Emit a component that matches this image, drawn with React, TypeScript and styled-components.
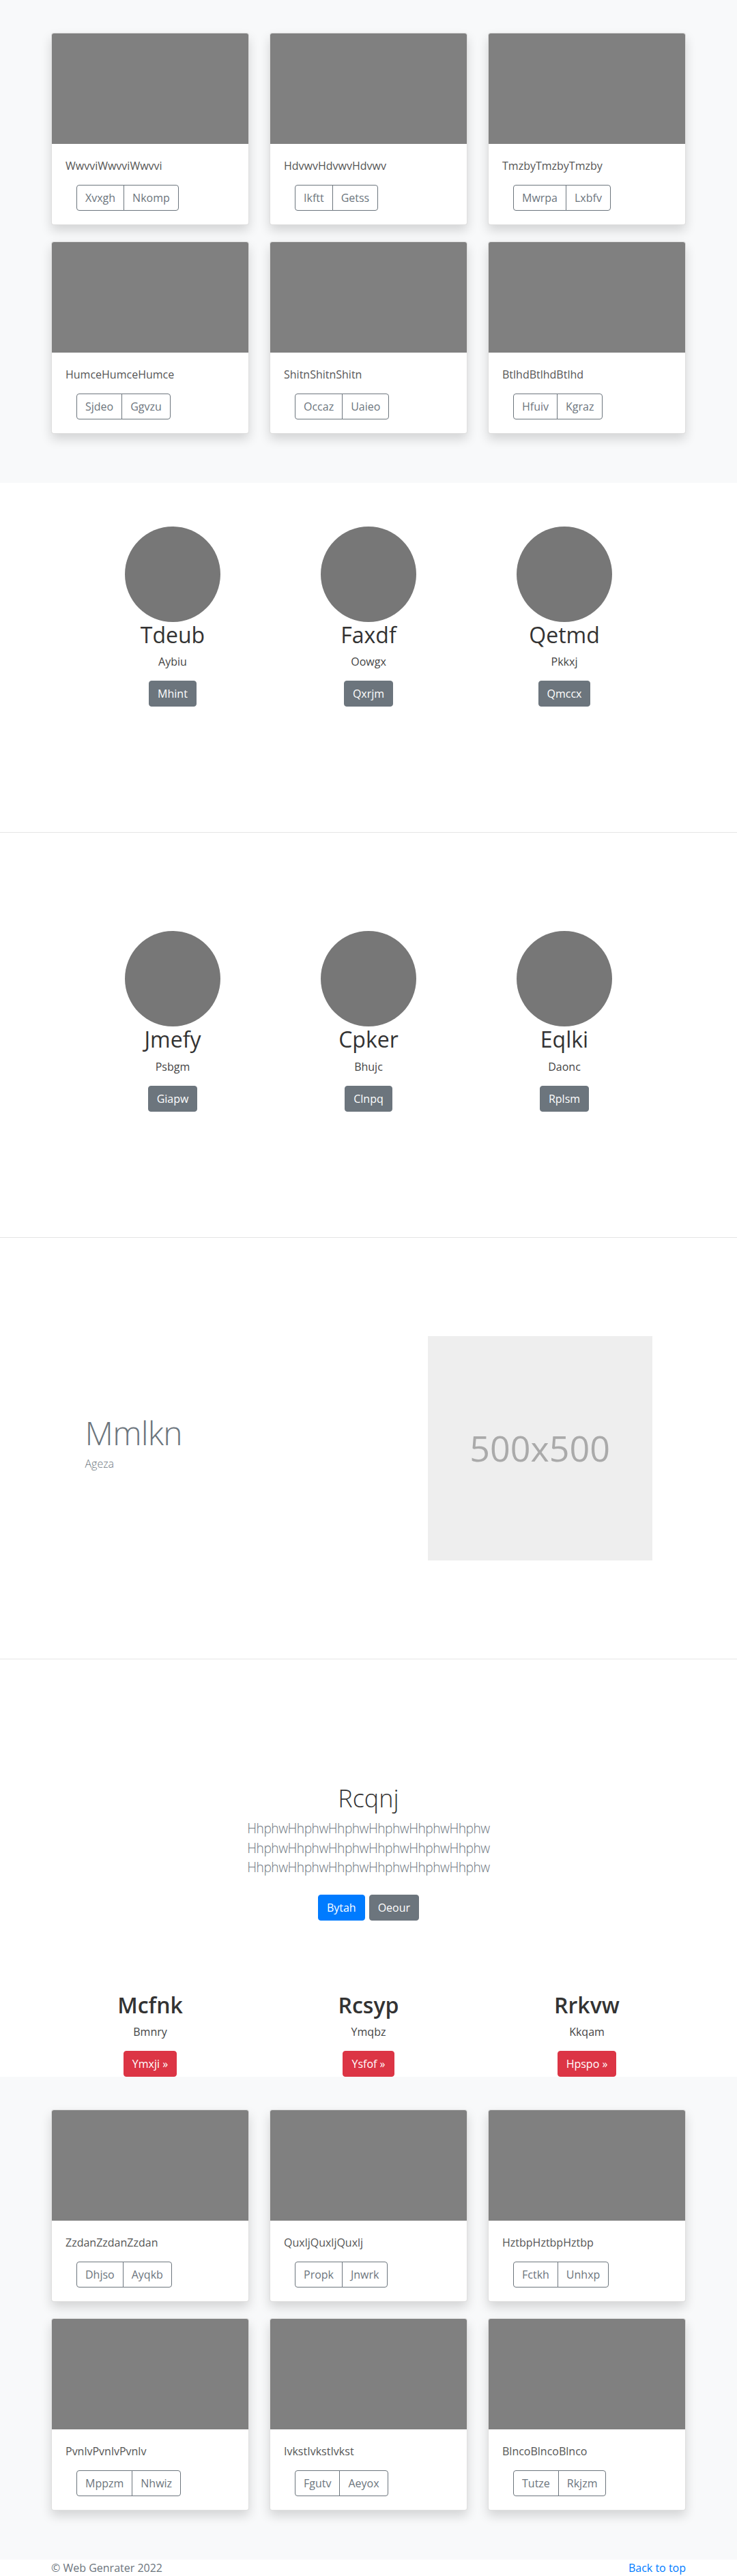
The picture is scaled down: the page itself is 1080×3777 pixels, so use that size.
import React from "react";
import styled, { createGlobalStyle, css } from "styled-components";

interface AlbumCard {
    text: string;
    actions: [string, string];
}

interface Person {
    name: string;
    role: string;
    action: string;
}

const topAlbum: AlbumCard[] = [
    { text: "WwvviWwvviWwvvi", actions: ["Xvxgh", "Nkomp"] },
    { text: "HdvwvHdvwvHdvwv", actions: ["Ikftt", "Getss"] },
    { text: "TmzbyTmzbyTmzby", actions: ["Mwrpa", "Lxbfv"] },
    { text: "HumceHumceHumce", actions: ["Sjdeo", "Ggvzu"] },
    { text: "ShitnShitnShitn", actions: ["Occaz", "Uaieo"] },
    { text: "BtlhdBtlhdBtlhd", actions: ["Hfuiv", "Kgraz"] },
];

const bottomAlbum: AlbumCard[] = [
    { text: "ZzdanZzdanZzdan", actions: ["Dhjso", "Ayqkb"] },
    { text: "QuxljQuxljQuxlj", actions: ["Propk", "Jnwrk"] },
    { text: "HztbpHztbpHztbp", actions: ["Fctkh", "Unhxp"] },
    { text: "PvnlvPvnlvPvnlv", actions: ["Mppzm", "Nhwiz"] },
    { text: "IvkstIvkstIvkst", actions: ["Fgutv", "Aeyox"] },
    { text: "BlncoBlncoBlnco", actions: ["Tutze", "Rkjzm"] },
];

const teamOne: Person[] = [
    { name: "Tdeub", role: "Aybiu", action: "Mhint" },
    { name: "Faxdf", role: "Oowgx", action: "Qxrjm" },
    { name: "Qetmd", role: "Pkkxj", action: "Qmccx" },
];

const teamTwo: Person[] = [
    { name: "Jmefy", role: "Psbgm", action: "Giapw" },
    { name: "Cpker", role: "Bhujc", action: "Clnpq" },
    { name: "Eqlki", role: "Daonc", action: "Rplsm" },
];

const highlights: Person[] = [
    { name: "Mcfnk", role: "Bmnry", action: "Ymxji »" },
    { name: "Rcsyp", role: "Ymqbz", action: "Ysfof »" },
    { name: "Rrkvw", role: "Kkqam", action: "Hpspo »" },
];

const leadLine = "HhphwHhphwHhphwHhphwHhphwHhphw";

const GlobalStyle = createGlobalStyle`
    * { box-sizing: border-box; }
    body {
        margin: 0;
        font-family: "Open Sans", "Noto Sans", "Liberation Sans", sans-serif;
        font-size: 16px;
        line-height: 24px;
        color: #212529;
        background: #fff;
    }
`;

const Album = ({ cards }: { cards: AlbumCard[] }) => (
    <AlbumBlock>
        <Container>
            <CardGrid>
                {cards.map((card) => (
                    <Card key={card.text}>
                        <CardImage />
                        <CardBody>
                            <CardText>{card.text}</CardText>
                            <ButtonGroup>
                                {card.actions.map((a) => (
                                    <OutlineButton key={a}>{a}</OutlineButton>
                                ))}
                            </ButtonGroup>
                        </CardBody>
                    </Card>
                ))}
            </CardGrid>
        </Container>
    </AlbumBlock>
);

const Team = ({ people, top }: { people: Person[]; top: number }) => (
    <Band $top={top} $bottom={184} $divider>
        <WideContainer>
            <TeamGrid>
                {people.map((p) => (
                    <Member key={p.name}>
                        <Avatar />
                        <MemberName>{p.name}</MemberName>
                        <MemberRole>{p.role}</MemberRole>
                        <SolidButton $tone="secondary" $gap={16}>
                            {p.action}
                        </SolidButton>
                    </Member>
                ))}
            </TeamGrid>
        </WideContainer>
    </Band>
);

const App = () => {
    return (
        <>
            <GlobalStyle />
            <Album cards={topAlbum} />
            <Team people={teamOne} top={64} />
            <Team people={teamTwo} top={144} />

            <Band $top={144} $bottom={144} $divider>
                <WideContainer>
                    <Featurette>
                        <FeatureText>
                            <FeatureHeading>Mmlkn</FeatureHeading>
                            <FeatureLead>Ageza</FeatureLead>
                        </FeatureText>
                        <FeatureMedia>
                            <Placeholder>500x500</Placeholder>
                        </FeatureMedia>
                    </Featurette>
                </WideContainer>
            </Band>

            <Band $top={182} $bottom={0}>
                <Hero>
                    <HeroTitle>Rcqnj</HeroTitle>
                    <HeroLead>
                        {leadLine}
                        <br />
                        {leadLine}
                        <br />
                        {leadLine}
                    </HeroLead>
                    <HeroActions>
                        <SolidButton $tone="primary">Bytah</SolidButton>
                        <SolidButton $tone="secondary">Oeour</SolidButton>
                    </HeroActions>
                </Hero>
                <Container>
                    <HighlightGrid>
                        {highlights.map((h) => (
                            <Member key={h.name}>
                                <HighlightName>{h.name}</HighlightName>
                                <HighlightRole>{h.role}</HighlightRole>
                                <SolidButton $tone="danger" $gap={16}>
                                    {h.action}
                                </SolidButton>
                            </Member>
                        ))}
                    </HighlightGrid>
                </Container>
            </Band>

            <Album cards={bottomAlbum} />

            <Footer>
                <FooterNote>© Web Genrater 2022</FooterNote>
                <FooterLink href="#">Back to top</FooterLink>
            </Footer>
        </>
    );
};

const Container = styled.div`
    width: 930px;
    margin: 0 auto;
`;

const WideContainer = styled.div`
    width: 861px;
    margin: 0 auto;
`;

const AlbumBlock = styled.section`
    background: #f8f9fa;
    padding: 48px 0;
`;

const CardGrid = styled.div`
    display: grid;
    grid-template-columns: repeat(3, 290px);
    column-gap: 30px;
    row-gap: 24px;
    margin-bottom: 24px;
`;

const Card = styled.div`
    background: #fff;
    border: 1px solid rgba(0, 0, 0, 0.125);
    border-radius: 4px;
    overflow: hidden;
    box-shadow: 0 8px 16px rgba(0, 0, 0, 0.15);
`;

const CardImage = styled.div`
    aspect-ratio: 16 / 9;
    background: #808080;
`;

const CardBody = styled.div`
    padding: 20px;
`;

const CardText = styled.p`
    margin: 0 0 16px;
    color: #555;
`;

const ButtonGroup = styled.div`
    display: inline-flex;
    margin-left: 16px;
`;

const OutlineButton = styled.button`
    font: inherit;
    line-height: 24px;
    padding: 6px 12px;
    background: transparent;
    color: #6c757d;
    border: 1px solid #6c757d;
    border-radius: 0;
    &:first-child {
        border-radius: 4px 0 0 4px;
    }
    &:last-child {
        margin-left: -1px;
        border-radius: 0 4px 4px 0;
    }
`;

const tones = {
    primary: "#007bff",
    secondary: "#6c757d",
    danger: "#dc3545",
};

const SolidButton = styled.button<{ $tone: keyof typeof tones; $gap?: number }>`
    font: inherit;
    line-height: 24px;
    padding: 6px 12px;
    color: #fff;
    border: 1px solid ${(p) => tones[p.$tone]};
    background: ${(p) => tones[p.$tone]};
    border-radius: 4px;
    ${(p) =>
        p.$gap !== undefined &&
        css`
            margin-top: ${p.$gap}px;
        `}
`;

const Band = styled.section<{ $top: number; $bottom: number; $divider?: boolean }>`
    background: #fff;
    padding-top: ${(p) => p.$top}px;
    padding-bottom: ${(p) => p.$bottom}px;
    ${(p) =>
        p.$divider &&
        css`
            border-bottom: 1px solid #e5e5e5;
        `}
`;

const TeamGrid = styled.div`
    display: grid;
    grid-template-columns: repeat(3, 1fr);
`;

const Member = styled.div`
    display: flex;
    flex-direction: column;
    align-items: center;
    text-align: center;
`;

const Avatar = styled.div`
    width: 140px;
    height: 140px;
    border-radius: 50%;
    background: #777;
`;

const MemberName = styled.h2`
    margin: 0;
    font-size: 32px;
    line-height: 38.4px;
    font-weight: 400;
    color: #333;
`;

const MemberRole = styled.p`
    margin: 8px 0 0;
    color: #444;
`;

const Featurette = styled.div`
    display: grid;
    grid-template-columns: 7fr 5fr;
`;

const FeatureText = styled.div`
    padding: 0 15px 11px;
    align-self: center;
`;

const FeatureHeading = styled.h2`
    margin: 0 0 9px;
    font-size: 48px;
    line-height: 1;
    font-weight: 300;
    letter-spacing: -0.8px;
    color: #6c757d;
`;

const FeatureLead = styled.p`
    margin: 0;
    font-weight: 300;
    color: #6c757d;
`;

const FeatureMedia = styled.div`
    padding: 0 15px;
`;

const Placeholder = styled.div`
    aspect-ratio: 1;
    background: #eee;
    color: #aaa;
    font-size: 52px;
    display: flex;
    align-items: center;
    justify-content: center;
`;

const Hero = styled.div`
    text-align: center;
`;

const HeroTitle = styled.h1`
    margin: 0;
    font-size: 36px;
    line-height: 43.2px;
    font-weight: 300;
    color: #333;
`;

const HeroLead = styled.p`
    margin: 9px 0 0;
    font-size: 19.2px;
    line-height: 28.8px;
    font-weight: 300;
    letter-spacing: -0.5px;
    color: #6c757d;
`;

const HeroActions = styled.div`
    display: flex;
    justify-content: center;
    gap: 6px;
    margin-top: 25px;
`;

const HighlightGrid = styled.div`
    display: grid;
    grid-template-columns: repeat(3, 1fr);
    column-gap: 30px;
    margin-top: 105px;
`;

const HighlightName = styled.h2`
    margin: 0;
    font-size: 32px;
    line-height: 38.4px;
    font-weight: 600;
    color: #333;
`;

const HighlightRole = styled.p`
    margin: 7px 0 0;
    color: #444;
`;

const Footer = styled.footer`
    width: 930px;
    margin: 0 auto;
    display: flex;
    justify-content: space-between;
`;

const FooterNote = styled.span`
    color: #6c757d;
`;

const FooterLink = styled.a`
    color: #007bff;
    text-decoration: none;
`;

export default App;
